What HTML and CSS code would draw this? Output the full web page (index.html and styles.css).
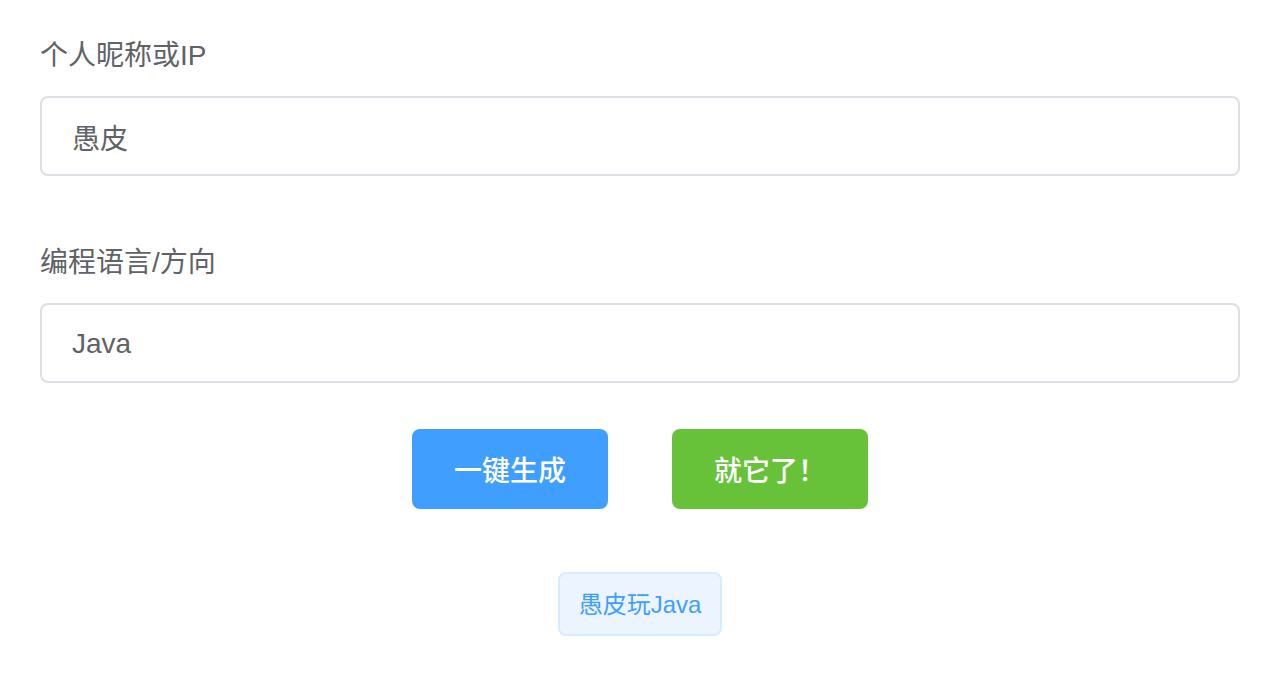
FILE: index.html
```html
<!DOCTYPE html>
<html lang="zh-CN">
<head>
<meta charset="utf-8">
<title>生成</title>
<link rel="stylesheet" href="styles.css">
</head>
<body>
<div class="page">
  <form class="form">
    <div class="form-item">
      <label class="label">个人昵称或IP</label>
      <div class="input"><input type="text" value="愚皮"></div>
    </div>
    <div class="form-item">
      <label class="label">编程语言/方向</label>
      <div class="input"><input type="text" value="Java"></div>
    </div>
    <div class="actions">
      <button type="button" class="btn btn-primary">一键生成</button>
      <button type="button" class="btn btn-success">就它了！</button>
    </div>
    <div class="tags">
      <span class="tag">愚皮玩Java</span>
    </div>
  </form>
</div>
</body>
</html>
```

FILE: styles.css
```css
* { box-sizing: border-box; }
html, body { margin: 0; padding: 0; background: #fff; }
body {
  font-family: "Liberation Sans", "Noto Sans CJK SC", sans-serif;
  color: #606266;
}
.page {
  width: 1200px;
  margin-left: 40px;
  padding-top: 16px;
}
.form-item { margin-bottom: 47px; }
.form-item + .form-item { margin-bottom: 46px; }
.label {
  display: block;
  height: 80px;
  line-height: 80px;
  font-size: 28px;
  color: #606266;
}
.input input {
  display: block;
  width: 100%;
  height: 80px;
  border: 2px solid #dcdfe6;
  border-radius: 8px;
  padding: 2px 30px 0;
  font-family: "Liberation Sans", "Noto Sans CJK SC", sans-serif;
  font-size: 28px;
  color: #606266;
  background: #fff;
  outline: none;
}
.actions {
  display: flex;
  justify-content: center;
  gap: 64px;
}
.btn {
  width: 196px;
  height: 80px;
  border: 2px solid transparent;
  border-radius: 8px;
  color: #fff;
  font-family: "Liberation Sans", "Noto Sans CJK SC", sans-serif;
  font-size: 28px;
  font-weight: 500;
  padding: 0;
  cursor: pointer;
}
.btn-primary { background: #409eff; border-color: #409eff; }
.btn-success { background: #67c23a; border-color: #67c23a; }
.tags {
  display: flex;
  justify-content: center;
  margin-top: 63px;
}
.tag {
  display: inline-flex;
  align-items: center;
  justify-content: center;
  width: 164px;
  height: 64px;
  padding-bottom: 4px;
  background: #ecf5ff;
  border: 2px solid #d9ecff;
  border-radius: 8px;
  color: #409eff;
  font-size: 24px;
}
```
